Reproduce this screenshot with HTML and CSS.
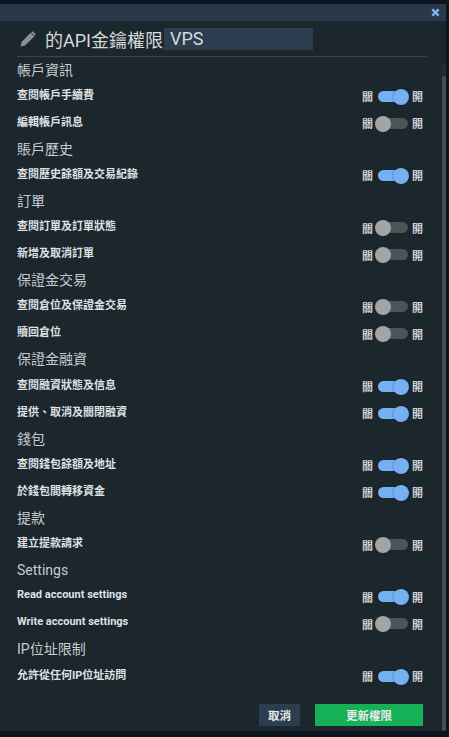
FILE: index.html
```html
<!DOCTYPE html>
<html lang="zh-Hant">
<head>
  <meta charset="UTF-8">
  <title>API</title>
  <link rel="stylesheet" href="styles.css">
</head>
<body>
  <div class="modal">
    <div class="modal-bar">
      <svg class="close" viewBox="0 0 10 10" width="9" height="9"><path d="M1.5 1.5l7 7M8.5 1.5l-7 7" stroke="#7ab5f5" stroke-width="2.6"/></svg>
    </div>
    <div class="content">
      <div class="title">
        <svg class="pencil" viewBox="0 0 16 16" width="16" height="16"><path d="M0.5 15.5l1-4.6L10.6 1.8l3.6 3.6-9.1 9.1z M11.5 0.9c.6-.6 1.4-.6 2 0l1.6 1.6c.6.6.6 1.4 0 2l-.4.4-3.6-3.6z" fill="#8a9094"/></svg>
        <span>的API金鑰權限</span>
        <span class="name">VPS</span>
      </div>

      <h3>帳戶資訊</h3>
      <div class="row"><span class="label">查閱帳戶手續費</span><span class="sw">關<i class="toggle on"></i>開</span></div>
      <div class="row"><span class="label">編輯帳戶訊息</span><span class="sw">關<i class="toggle"></i>開</span></div>

      <h3>賬戶歷史</h3>
      <div class="row"><span class="label">查閱歷史餘額及交易紀錄</span><span class="sw">關<i class="toggle on"></i>開</span></div>

      <h3>訂單</h3>
      <div class="row"><span class="label">查閱訂單及訂單狀態</span><span class="sw">關<i class="toggle"></i>開</span></div>
      <div class="row"><span class="label">新增及取消訂單</span><span class="sw">關<i class="toggle"></i>開</span></div>

      <h3>保證金交易</h3>
      <div class="row"><span class="label">查閱倉位及保證金交易</span><span class="sw">關<i class="toggle"></i>開</span></div>
      <div class="row"><span class="label">贖回倉位</span><span class="sw">關<i class="toggle"></i>開</span></div>

      <h3>保證金融資</h3>
      <div class="row"><span class="label">查閱融資狀態及信息</span><span class="sw">關<i class="toggle on"></i>開</span></div>
      <div class="row"><span class="label">提供、取消及關閉融資</span><span class="sw">關<i class="toggle on"></i>開</span></div>

      <h3>錢包</h3>
      <div class="row"><span class="label">查閱錢包餘額及地址</span><span class="sw">關<i class="toggle on"></i>開</span></div>
      <div class="row"><span class="label">於錢包間轉移資金</span><span class="sw">關<i class="toggle on"></i>開</span></div>

      <h3>提款</h3>
      <div class="row"><span class="label">建立提款請求</span><span class="sw">關<i class="toggle"></i>開</span></div>

      <h3>Settings</h3>
      <div class="row"><span class="label">Read account settings</span><span class="sw">關<i class="toggle on"></i>開</span></div>
      <div class="row"><span class="label">Write account settings</span><span class="sw">關<i class="toggle"></i>開</span></div>

      <h3>IP位址限制</h3>
      <div class="row"><span class="label">允許從任何IP位址訪問</span><span class="sw">關<i class="toggle on"></i>開</span></div>

      <div class="actions">
        <button class="btn cancel">取消</button>
        <button class="btn update">更新權限</button>
      </div>
    </div>
    <div class="scrollbar"><div class="thumb"></div></div>
  </div>
</body>
</html>
```

FILE: styles.css
```css
* {
  box-sizing: border-box;
  margin: 0;
  padding: 0;
}

html, body {
  height: 100%;
  overflow: hidden;
}

body {
  background-color: #0a151f;
  font-family: Roboto, "Noto Sans CJK TC", sans-serif;
  color: #d6d9db;
  padding: 4px 3px 6px 0;
}

.modal {
  position: relative;
  height: 100%;
  background-color: #1b262d;
}

.modal-bar {
  height: 17px;
  background-color: #2a3947;
  display: flex;
  align-items: center;
  justify-content: flex-end;
  padding-right: 6px;
}

.content {
  padding: 0 19px 0 17px;
}

.title {
  display: flex;
  align-items: center;
  height: 36px;
  padding-left: 3px;
  border-bottom: 1px solid #3a444b;
  font-size: 18px;
  color: #d6d9db;
}

.pencil {
  margin-right: 9px;
}

.name {
  width: 149px;
  height: 22px;
  line-height: 22px;
  margin-left: 1px;
  padding-left: 6px;
  background-color: #2b3d4f;
}

h3 {
  font-size: 14px;
  font-weight: 400;
  height: 25.25px;
  line-height: 25px;
  color: #c8cbcd;
}

.title + h3 {
  margin-top: 0.4px;
  line-height: 27px;
}

.row {
  display: flex;
  align-items: center;
  justify-content: space-between;
  height: 27px;
  font-size: 11px;
  font-weight: 700;
  color: #dfe1e3;
}

.label {
  margin-bottom: 5px;
}

.sw {
  display: flex;
  align-items: center;
  color: #cfd2d4;
  padding-right: 4px;
}

.toggle {
  position: relative;
  display: block;
  width: 30px;
  height: 11px;
  margin: 0 4px 0 5px;
  border-radius: 6px;
  background-color: #4a5459;
}

.toggle::after {
  content: "";
  position: absolute;
  top: -2px;
  left: -3px;
  width: 16px;
  height: 16px;
  border-radius: 50%;
  background-color: #a2a5a8;
}

.toggle.on {
  background-color: #74b0f2;
}

.toggle.on::after {
  left: auto;
  right: -1px;
  background-color: #74b0f2;
  box-shadow: 0 0 2px rgba(0, 0, 0, 0.5);
}

.actions {
  display: flex;
  justify-content: flex-end;
  gap: 15px;
  margin-top: 14px;
  padding-right: 4px;
}

.btn {
  height: 22px;
  border: none;
  font-family: inherit;
  font-size: 11.5px;
  font-weight: 700;
  color: #e8eaeb;
}

.cancel {
  width: 41px;
  background-color: #2b3d4f;
}

.update {
  width: 108px;
  background-color: #16b157;
}

.scrollbar {
  position: absolute;
  top: 60px;
  right: 0;
  bottom: 0;
  width: 4px;
  background-color: #212c33;
}

.thumb {
  position: absolute;
  top: 12px;
  bottom: 0;
  width: 100%;
  border-radius: 2px;
  background-color: #434e55;
}
```
